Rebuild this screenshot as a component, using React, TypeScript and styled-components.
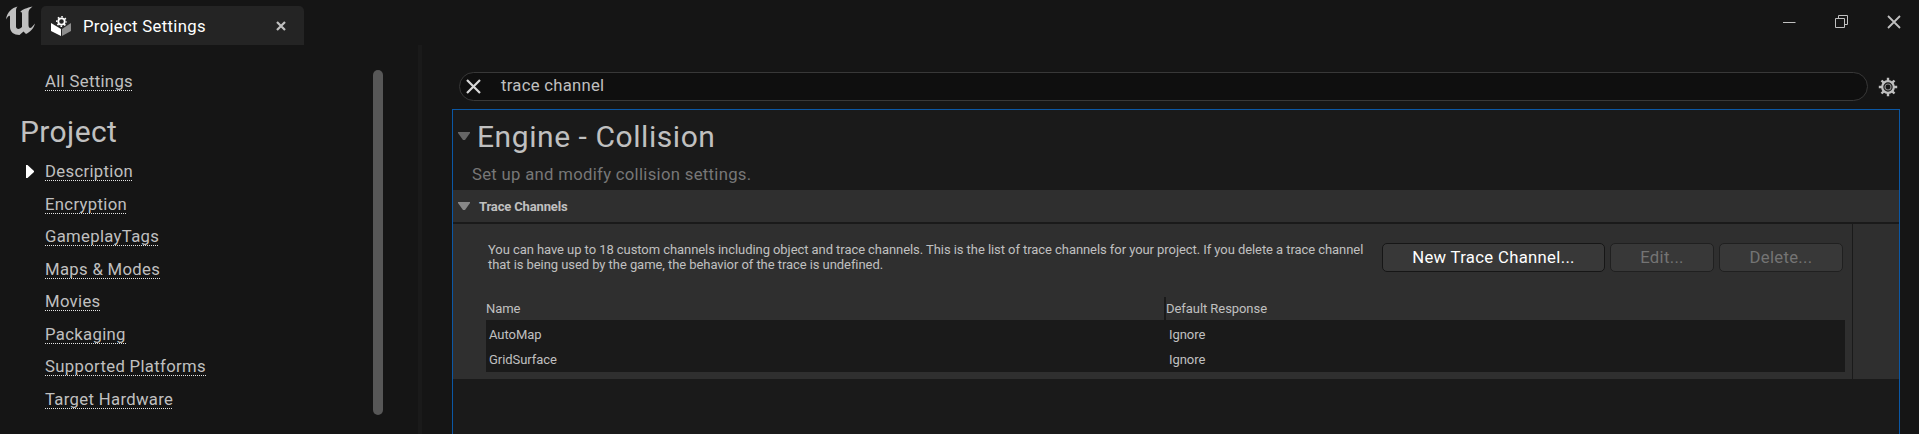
import React from 'react';
import styled, { createGlobalStyle } from 'styled-components';

const Global = createGlobalStyle`
  * { box-sizing: border-box; }
  html, body { margin: 0; padding: 0; }
  body { background: #151515; font-family: Roboto, sans-serif; color: #c0c0c0; overflow: hidden; }
`;

const Window = styled.div`
  width: 100vw;
  height: 434px;
  display: flex;
  flex-direction: column;
  background: #151515;
  overflow: hidden;
`;

const TitleBar = styled.header`
  height: 45px;
  flex: none;
  display: flex;
  align-items: flex-start;
  padding-left: 5px;
`;

const LogoSlot = styled.div`
  width: 36px;
  padding-top: 5px;
  line-height: 0;
`;

const Tab = styled.div`
  display: flex;
  align-items: center;
  width: 263px;
  height: 39px;
  margin-top: 6px;
  padding: 0 18px 0 9px;
  border-radius: 5px 5px 0 0;
  background: #242424;
  color: #fff;
  svg { display: block; }
`;

const TabLabel = styled.span`
  flex: 1;
  margin: 2px 0 0 11px;
  font-size: 16.7px;
  line-height: 20px;
  letter-spacing: 0.33px;
`;

const WindowControls = styled.div`
  margin-left: auto;
  display: flex;
  align-items: center;
  gap: 38px;
  height: 44px;
  padding-right: 18px;
  svg { display: block; }
`;

const Body = styled.div`
  flex: 1;
  min-height: 0;
  display: flex;
`;

const Sidebar = styled.nav`
  width: 373px;
  padding: 25px 0 0 20px;
`;

const Link = styled.a<{ $current?: boolean }>`
  display: flex;
  align-items: flex-start;
  height: 32.55px;
  svg { display: block; width: 8px; height: 13px; margin: 5px 11px 0 6px; visibility: ${(p) => (p.$current ? 'visible' : 'hidden')}; }
`;

const LinkText = styled.span`
  height: 21px;
  font-size: 16.7px;
  line-height: 24px;
  letter-spacing: 0.33px;
  white-space: nowrap;
  background: repeating-linear-gradient(90deg, #e4e4e4 0 1px, transparent 1px 2px) 0 100% / 100% 1px no-repeat;
`;

const GroupTitle = styled.h2`
  margin: 12.45px 0 12px;
  height: 33px;
  font-size: 30px;
  font-weight: 400;
  line-height: 33px;
  letter-spacing: 0.4px;
`;

const Scrollbar = styled.div`
  width: 10px;
  height: 345px;
  margin-top: 25px;
  border-radius: 5px;
  background: #575757;
`;

const Splitter = styled.div`
  width: 4px;
  margin-left: 35px;
  background: #1a1a1a;
`;

const Main = styled.main`
  flex: 1;
  min-width: 0;
  display: flex;
  flex-direction: column;
  padding: 27px 19px 0 30px;
`;

const SearchRow = styled.div`
  display: flex;
  align-items: center;
  height: 29px;
  padding-left: 7px;
  svg { display: block; }
`;

const SearchBox = styled.div`
  width: 1409px;
  height: 29px;
  display: flex;
  align-items: center;
  padding-left: 6px;
  border: 1px solid #383838;
  border-radius: 15px;
  background: #0f0f0f;
  margin-right: 10px;
`;

const SearchText = styled.span`
  margin: -2px 0 0 20px;
  font-size: 16.7px;
  line-height: 20px;
  letter-spacing: 0.27px;
`;

const Panel = styled.section`
  flex: 1;
  margin-top: 8px;
  border: 1px solid #0b57a4;
  border-bottom: 0;
  background: #1a1a1a;
`;

const PanelHead = styled.div`
  height: 80px;
  padding: 10px 0 0 5px;
`;

const TitleLine = styled.div`
  display: flex;
  align-items: center;
  height: 32px;
`;

const Title = styled.h1`
  margin: 1px 0 0 7px;
  font-size: 30px;
  font-weight: 400;
  line-height: 32px;
  letter-spacing: 0.56px;
`;

const Subtitle = styled.p`
  margin: 13px 0 0 14px;
  font-size: 16.7px;
  line-height: 20px;
  letter-spacing: 0.3px;
  color: #777;
`;

const SectionBar = styled.div`
  height: 34px;
  display: flex;
  align-items: center;
  padding-left: 5px;
  border-bottom: 2px solid #1a1a1a;
  background: #2f2f2f;
`;

const SectionName = styled.span`
  margin-left: 9px;
  font-size: 13px;
  font-weight: 700;
  letter-spacing: -0.15px;
`;

const Content = styled.div`
  display: flex;
  height: 155px;
  background: #2f2f2f;
`;

const Editor = styled.div`
  flex: 1;
  padding-left: 33px;
`;

const ResetColumn = styled.div`
  width: 47px;
  border-left: 1px solid #1a1a1a;
`;

const Intro = styled.div`
  display: flex;
  height: 73px;
`;

const Note = styled.p`
  flex: none;
  width: 896px;
  margin: 18px 0 0;
  padding-left: 2px;
  font-size: 13px;
  line-height: 15px;
  letter-spacing: -0.065px;
  white-space: nowrap;
`;

const Button = styled.button<{ $width: number }>`
  flex: none;
  width: ${(p) => p.$width}px;
  height: 29px;
  margin: 19px 5px 0 0;
  padding: 0;
  border: 1px solid #161616;
  border-radius: 5px;
  background: #383838;
  color: #fff;
  font: 16.7px/20px Roboto, sans-serif;
  letter-spacing: 0.32px;
  &:disabled { color: #747474; border-color: #202020; }
`;

const Table = styled.div`
  width: 1359px;
  font-size: 13px;
  letter-spacing: -0.06px;
`;

const HeaderRow = styled.div`
  display: grid;
  grid-template-columns: 678px 1fr;
  height: 23px;
  line-height: 23px;
`;

const HeaderCell = styled.span<{ $divided?: boolean }>`
  border-left: ${(p) => (p.$divided ? '2px solid #1a1a1a' : '0')};
`;

const Rows = styled.div`
  padding: 1px 0;
  background: #1a1a1a;
`;

const Row = styled.div`
  display: grid;
  grid-template-columns: 680px 1fr;
  height: 25px;
  line-height: 27px;
`;

const Cell = styled.span`
  padding-left: 3px;
`;

const Logo = () => (
  <svg width="31" height="31" viewBox="0 0 31 31" fill="#c0c0c0">
    <path d="M1 14.5C2 7 7 3 12.5 1.5C11.3 3 11 4 11 6V21.5C11 23.5 13 24.5 15 23.5L17 22V9C17 7.5 16.5 6.5 15 7.5C17 4 22 3 27.5 1.5C24.5 4 23.5 5 23.5 8V20C23.5 23 25 23.5 26.5 22.5L30 18.5C28.5 24 25 27 21 29L18.5 26.5L14.5 30C9 30 5 27 5 22V12C5 9.5 3 11 1 14.5Z" />
  </svg>
);

const TabIcon = () => (
  <svg width="22" height="22" viewBox="0 0 22 22">
    <path d="M1 8L11 14V21L1 16Z" fill="#fff" />
    <path d="M21 8L12 14V21L21 16Z" fill="#8c8c8c" />
    <circle cx="11.5" cy="6.5" r="3.2" fill="none" stroke="#fff" strokeWidth="1.8" />
    <circle cx="11.5" cy="6.5" r="4.7" fill="none" stroke="#fff" strokeWidth="1.6" strokeDasharray="1.6 2.091" strokeDashoffset="0.8" />
  </svg>
);

const Cross = ({ size, weight, color = '#c0c0c0' }: { size: number; weight: number; color?: string }) => (
  <svg width={size} height={size} viewBox={`0 0 ${size} ${size}`} stroke={color} strokeWidth={weight}>
    <path d={`M1 1L${size - 1} ${size - 1}M${size - 1} 1L1 ${size - 1}`} />
  </svg>
);

const Caret = ({ color }: { color: string }) => (
  <svg width="12" height="8" viewBox="0 0 12 8" fill={color}>
    <path d="M0 0H12V1L7 8H5L0 1Z" />
  </svg>
);

const Gear = () => (
  <svg width="20" height="20" viewBox="0 0 20 20" fill="none" stroke="#c0c0c0">
    <circle cx="10" cy="10" r="5.8" strokeWidth="2.2" />
    <circle cx="10" cy="10" r="3" strokeWidth="1.2" stroke="#8a8a8a" />
    <path strokeWidth="2.4" d="M10 .8V4M10 16V19.2M.8 10H4M16 10H19.2M3.5 3.5L5.7 5.7M14.3 14.3L16.5 16.5M16.5 3.5L14.3 5.7M5.7 14.3L3.5 16.5" />
  </svg>
);

const NavLink = ({ label, current }: { label: string; current?: boolean }) => (
  <Link $current={current}>
    <svg viewBox="0 0 8 13" fill="#fff"><path d="M0 0H1.5L8 6V7L1.5 13H0Z" /></svg>
    <LinkText>{label}</LinkText>
  </Link>
);

const projectPages = ['Description', 'Encryption', 'GameplayTags', 'Maps & Modes', 'Movies', 'Packaging', 'Supported Platforms', 'Target Hardware'];
const channels = [
  { name: 'AutoMap', response: 'Ignore' },
  { name: 'GridSurface', response: 'Ignore' },
];

export default function App() {
  return (
    <Window>
      <Global />
      <TitleBar>
        <LogoSlot><Logo /></LogoSlot>
        <Tab>
          <TabIcon />
          <TabLabel>Project Settings</TabLabel>
          <Cross size={10} weight={2.2} />
        </Tab>
        <WindowControls>
          <svg width="14" height="14" viewBox="0 0 14 14"><path d="M0 7.5H12.5" stroke="#c0c0c0" /></svg>
          <svg width="14" height="14" viewBox="0 0 14 14" fill="none" stroke="#c0c0c0"><path d="M.5 3.5H9.5V12.5H.5ZM3.5 3.5V.5H12.5V9.5H9.5" /></svg>
          <Cross size={14} weight={1.8} />
        </WindowControls>
      </TitleBar>
      <Body>
        <Sidebar>
          <NavLink label="All Settings" />
          <GroupTitle>Project</GroupTitle>
          {projectPages.map((page, i) => <NavLink key={page} label={page} current={i === 0} />)}
        </Sidebar>
        <Scrollbar />
        <Splitter />
        <Main>
          <SearchRow>
            <SearchBox>
              <Cross size={15} weight={2.2} color="#d8d8d8" />
              <SearchText>trace channel</SearchText>
            </SearchBox>
            <Gear />
          </SearchRow>
          <Panel>
            <PanelHead>
              <TitleLine><Caret color="#666" /><Title>Engine - Collision</Title></TitleLine>
              <Subtitle>Set up and modify collision settings.</Subtitle>
            </PanelHead>
            <SectionBar><Caret color="#888" /><SectionName>Trace Channels</SectionName></SectionBar>
            <Content>
              <Editor>
                <Intro>
                  <Note>
                    You can have up to 18 custom channels including object and trace channels. This is the list of trace channels for your project. If you delete a trace channel<br />
                    that is being used by the game, the behavior of the trace is undefined.
                  </Note>
                  <Button $width={223}>New Trace Channel...</Button>
                  <Button $width={104} disabled>Edit...</Button>
                  <Button $width={124} disabled>Delete...</Button>
                </Intro>
                <Table>
                  <HeaderRow><HeaderCell>Name</HeaderCell><HeaderCell $divided>Default Response</HeaderCell></HeaderRow>
                  <Rows>
                    {channels.map((c) => <Row key={c.name}><Cell>{c.name}</Cell><Cell>{c.response}</Cell></Row>)}
                  </Rows>
                </Table>
              </Editor>
              <ResetColumn />
            </Content>
          </Panel>
        </Main>
      </Body>
    </Window>
  );
}
